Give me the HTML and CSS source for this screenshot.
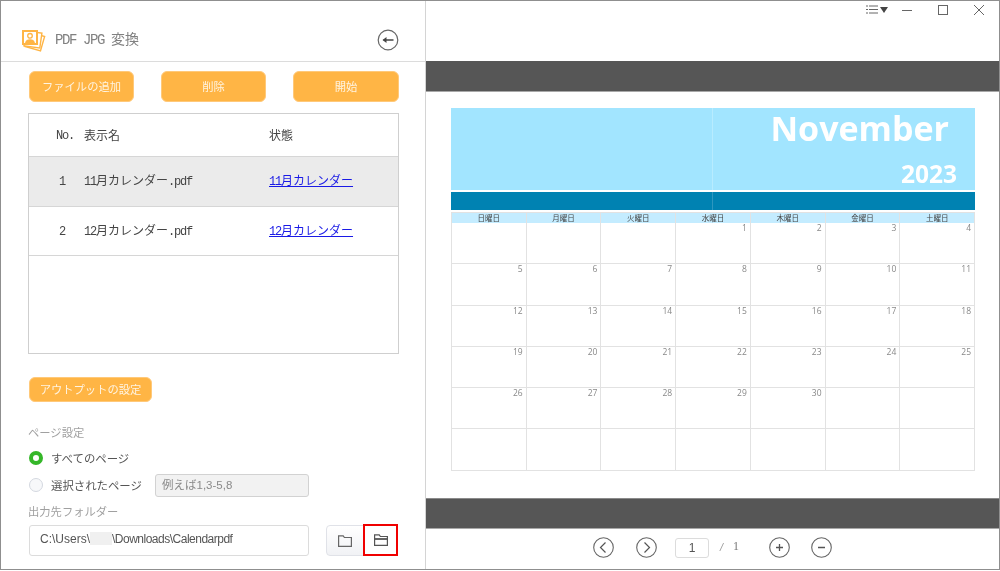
FILE: index.html
```html
<!DOCTYPE html>
<html lang="ja">
<head>
<meta charset="utf-8">
<title>PDF JPG 変換</title>
<link rel="stylesheet" href="styles.css">
</head>
<body>
<div class="window">
  <section class="left">
    <header class="left-head">
      <svg class="logo" width="25" height="25" viewBox="0 0 25 25">
        <rect x="5" y="5" width="16" height="15" transform="rotate(16 13 12)" fill="#fff" stroke="#ffb545" stroke-width="1.400"/>
        <rect x="3" y="3" width="16" height="15" transform="rotate(8 11 10)" fill="#fff" stroke="#ffb545" stroke-width="1.400"/>
        <rect x="0" y="1" width="16" height="15" fill="#ffb545"/>
        <rect x="2" y="3" width="12" height="11" fill="#fff"/>
        <circle cx="8" cy="6.800" r="2.300" fill="none" stroke="#ffb545" stroke-width="1.300"/>
        <path d="M3 14c.6-3 2.500-3.800 5-3.800s4.400.8 5 3.800z" fill="#ffb545"/>
      </svg>
      <h1 class="title"><span class="ltn-lg">PDF JPG </span>変換</h1>
      <svg class="back" width="22" height="22" viewBox="0 0 22 22">
        <circle cx="11" cy="11" r="9.800" fill="none" stroke="#666" stroke-width="1.200"/>
        <path d="M16.500 11H6.500" stroke="#444" stroke-width="1.500"/>
        <path d="M9.500 8L5.500 11l4 3z" fill="#444"/>
      </svg>
    </header>
    <div class="actions">
      <button class="btn btn-main">ファイルの追加</button>
      <button class="btn btn-main">削除</button>
      <button class="btn btn-main">開始</button>
    </div>
    <div class="table">
      <div class="tr th">
        <div class="c-no"><span class="ltn">No.</span></div>
        <div>表示名</div>
        <div>状態</div>
      </div>
      <div class="tr td selected">
        <div class="c-no num"><span class="ltn">1</span></div>
        <div><span class="ltn">11</span>月カレンダー<span class="ltn">.pdf</span></div>
        <div><a class="link" href="#"><span class="ltn">11</span>月カレンダー</a></div>
      </div>
      <div class="tr td td-short">
        <div class="c-no num"><span class="ltn">2</span></div>
        <div><span class="ltn">12</span>月カレンダー<span class="ltn">.pdf</span></div>
        <div><a class="link" href="#"><span class="ltn">12</span>月カレンダー</a></div>
      </div>
    </div>
    <button class="btn btn-output">アウトプットの設定</button>
    <div class="label label-page">ページ設定</div>
    <div class="radio-row first">
      <span class="radio on"></span><span class="radio-text">すべてのページ</span>
    </div>
    <div class="radio-row second">
      <span class="radio"></span><span class="radio-text">選択されたページ</span>
      <div class="range">例えば1,3-5,8</div>
    </div>
    <div class="label label-folder">出力先フォルダー</div>
    <div class="folder-row">
      <div class="path">C:\Users\<span class="redact"></span><span class="path-tail">\Downloads\Calendarpdf</span></div>
      <div class="folder-btns">
        <div class="fbtn">
          <svg width="14" height="12" viewBox="0 0 14 12"><path d="M.6 11.400V.8h4.600l1.200 1.700h7v8.900z" fill="none" stroke="#666" stroke-width="1.200"/></svg>
        </div>
        <div class="fbtn fbtn-marked">
          <svg width="14" height="12" viewBox="0 0 14 12"><path d="M.6 11.400V.8h4.600l1.200 1.700h7v8.900z" fill="none" stroke="#555" stroke-width="1.200"/><path d="M.6 5h12.800" stroke="#555" stroke-width="1.800"/></svg>
        </div>
      </div>
    </div>
  </section>

  <section class="right">
    <div class="win-bar">
      <svg class="w-menu" width="22" height="10" viewBox="0 0 22 10">
        <path d="M0 1h2M3 1h9M0 4.500h2M3 4.500h9M0 8h2M3 8h9" stroke="#666" stroke-width="1"/>
        <path d="M14 2h8l-4 6z" fill="#444"/>
      </svg>
      <svg class="w-min" width="10" height="10" viewBox="0 0 10 10"><path d="M0 5.500h10" stroke="#666" stroke-width="1"/></svg>
      <svg class="w-max" width="10" height="10" viewBox="0 0 10 10"><rect x=".5" y=".5" width="9" height="9" fill="none" stroke="#666"/></svg>
      <svg class="w-close" width="10" height="10" viewBox="0 0 10 10"><path d="M0 0l10 10M10 0L0 10" stroke="#666" stroke-width="1"/></svg>
    </div>
    <div class="band"></div>
    <div class="doc">
      <div class="sheet">
        <div class="cal-head">
          <div class="split"></div>
          <div class="cal-title">
            <div class="month">November</div>
            <div class="year">2023</div>
          </div>
        </div>
        <div class="cal-bar"><div class="split"></div></div>
        <div class="cal-grid">
          <div class="wd">日曜日</div><div class="wd">月曜日</div><div class="wd">火曜日</div><div class="wd">水曜日</div><div class="wd">木曜日</div><div class="wd">金曜日</div><div class="wd">土曜日</div>
          <div class="day"></div><div class="day"></div><div class="day"></div><div class="day">1</div><div class="day">2</div><div class="day">3</div><div class="day">4</div>
          <div class="day">5</div><div class="day">6</div><div class="day">7</div><div class="day">8</div><div class="day">9</div><div class="day">10</div><div class="day">11</div>
          <div class="day">12</div><div class="day">13</div><div class="day">14</div><div class="day">15</div><div class="day">16</div><div class="day">17</div><div class="day">18</div>
          <div class="day">19</div><div class="day">20</div><div class="day">21</div><div class="day">22</div><div class="day">23</div><div class="day">24</div><div class="day">25</div>
          <div class="day">26</div><div class="day">27</div><div class="day">28</div><div class="day">29</div><div class="day">30</div><div class="day"></div><div class="day"></div>
          <div class="day"></div><div class="day"></div><div class="day"></div><div class="day"></div><div class="day"></div><div class="day"></div><div class="day"></div>
        </div>
      </div>
    </div>
    <div class="band band-bottom"></div>
    <div class="pager">
      <svg class="pg pg-prev" width="21" height="21" viewBox="0 0 21 21"><circle cx="10.500" cy="10.500" r="9.800" fill="none" stroke="#666" stroke-width="1.100"/><path d="M12.500 5.500l-5 5 5 5" fill="none" stroke="#555" stroke-width="1.200"/></svg>
      <svg class="pg pg-next" width="21" height="21" viewBox="0 0 21 21"><circle cx="10.500" cy="10.500" r="9.800" fill="none" stroke="#666" stroke-width="1.100"/><path d="M8.500 5.500l5 5-5 5" fill="none" stroke="#555" stroke-width="1.200"/></svg>
      <div class="page-input">1</div>
      <span class="slash">/</span>
      <span class="total">1</span>
      <svg class="pg pg-plus" width="21" height="21" viewBox="0 0 21 21"><circle cx="10.500" cy="10.500" r="9.800" fill="none" stroke="#666" stroke-width="1.100"/><path d="M7 10.500h7M10.500 7v7" stroke="#555" stroke-width="1.300"/></svg>
      <svg class="pg pg-minus" width="21" height="21" viewBox="0 0 21 21"><circle cx="10.500" cy="10.500" r="9.800" fill="none" stroke="#666" stroke-width="1.100"/><path d="M7 10.500h7" stroke="#555" stroke-width="1.500"/></svg>
    </div>
  </section>
</div>
</body>
</html>
```
FILE: styles.css
```css
* { box-sizing: border-box; }
html, body { margin: 0; padding: 0; }
body {
  width: 1000px;
  height: 571px;
  overflow: hidden;
  background: #fff;
  font-family: "Liberation Sans", "Noto Sans CJK JP", sans-serif;
}
.window {
  display: flex;
  width: 1000px;
  height: 570px;
  border: 1px solid #8f8f8f;
  background: #fff;
  filter: blur(0.35px);
}

/* left panel */
.left {
  width: 425px;
  flex: none;
  border-right: 1px solid #d4d4d4;
  display: flex;
  flex-direction: column;
}
.left-head {
  height: 61px;
  flex: none;
  display: flex;
  align-items: flex-start;
  padding: 28px 0 0 21px;
  border-bottom: 1px solid #dcdcdc;
}
.logo { flex: none; }
.title {
  margin: 1px 0 0 8px;
  font: 400 14px/20px "Liberation Mono", "Noto Sans CJK JP", monospace;
  color: #808080;
}
.ltn-lg { font-size: 14px; letter-spacing: -1.4px; white-space: pre; }
.ltn { font-family: "Liberation Mono", monospace; font-size: 12px; letter-spacing: -1.2px; }
.back { margin: 0 0 0 238px; }

.btn {
  border: 1px solid #ffc97a;
  border-radius: 6px;
  background: #ffb545;
  color: #fff4e2;
  font: 400 11.300px/1 "Noto Sans CJK JP", sans-serif;
  padding: 0;
}
.actions {
  display: flex;
  gap: 27px;
  padding: 9px 0 0 28px;
}
.btn-main { width: 105px; height: 31px; }
.actions .btn:last-child { width: 106px; }

.table {
  margin: 11px 0 0 27px;
  width: 371px;
  height: 241px;
  border: 1px solid #cfcfcf;
  flex: none;
}
.tr {
  display: grid;
  grid-template-columns: 55px 185px 1fr;
  align-items: center;
  font: 400 12px/16px "Noto Sans CJK JP", sans-serif;
  color: #444;
  border-bottom: 1px solid #d6d6d6;
}
.th { height: 43px; }
.td { height: 50px; padding-bottom: 1px; }
.td-short { height: 49px; }
.selected { background: #ebebeb; }
.c-no { padding-left: 27px; }
.num { padding-left: 30px; }
.link { color: #1a1ae6; text-decoration: underline; }

.btn-output {
  width: 123px;
  height: 25px;
  margin: 23px 0 0 28px;
  flex: none;
}
.label {
  font: 400 11.300px/16px "Noto Sans CJK JP", sans-serif;
  color: #a0a0a0;
  padding-left: 27px;
}
.label-page { margin-top: 22px; }
.radio-row {
  display: flex;
  align-items: center;
  padding-left: 28px;
  height: 23px;
}
.first { margin-top: 6px; }
.second { margin-top: 4px; }
.radio {
  width: 14px;
  height: 14px;
  flex: none;
  border-radius: 50%;
  border: 1px solid #d4d8e0;
  background: #f7f8fa;
}
.radio.on {
  border: 4px solid #35b729;
  background: #fff;
}
.radio-text {
  margin-left: 8px;
  font: 400 11.400px/16px "Noto Sans CJK JP", sans-serif;
  color: #555;
  white-space: nowrap;
  width: 104px;
}
.range {
  width: 154px;
  height: 23px;
  margin-top: 2px;
  border: 1px solid #d2d2d2;
  border-radius: 3px;
  background: #f2f2f2;
  color: #8a8a8a;
  font: 400 11.500px/21px "Liberation Sans", "Noto Sans CJK JP", sans-serif;
  padding-left: 6px;
}
.label-folder { margin-top: 7px; }
.folder-row {
  display: flex;
  padding-left: 28px;
  margin-top: 6px;
}
.path {
  width: 280px;
  height: 31px;
  border: 1px solid #dcdcdc;
  border-radius: 3px;
  font-size: 12px;
  line-height: 26px;
  color: #555;
  padding-left: 10px;
  white-space: nowrap;
}
.path-tail { letter-spacing: -0.5px; }
.redact {
  display: inline-block;
  width: 22px;
  height: 13px;
  vertical-align: -2px;
  background: #f0f0f0;
}
.folder-btns {
  display: flex;
  margin-left: 17px;
  height: 31px;
  border: 1px solid #e0e2e8;
  border-radius: 4px;
  background: linear-gradient(#fff, #f1f2f5);
}
.fbtn {
  width: 36px;
  display: flex;
  align-items: center;
  justify-content: center;
}
.fbtn-marked {
  width: 35px;
  margin: -2px -1px -1px 0;
  border: 2px solid #f00000;
  background: #fff;
}

/* right panel */
.right {
  flex: 1;
  min-width: 0;
  display: flex;
  flex-direction: column;
}
.win-bar {
  height: 60px;
  flex: none;
  display: flex;
  align-items: flex-start;
  padding: 4px 0 0 440px;
}
.w-menu { flex: none; }
.w-min { margin-left: 14px; flex: none; }
.w-max { margin-left: 26px; flex: none; }
.w-close { margin-left: 26px; flex: none; }
.band {
  height: 31px;
  flex: none;
  background: #565656;
  border-bottom: 1px solid #a8a8a8;
}
.band-bottom { border-top: 1px solid #8a8a8a; }
.doc {
  height: 406px;
  flex: none;
  padding: 16px 0 0 25px;
}
.sheet { width: 524px; }
.cal-head {
  height: 82px;
  background: #a2e5ff;
  display: flex;
}
.split {
  width: 262px;
  flex: none;
  border-right: 1px solid #b8ecff;
}
.cal-title {
  flex: 1;
  display: flex;
  flex-direction: column;
  align-items: flex-end;
  color: #fff;
  font-family: "Open Sans", sans-serif;
  font-weight: 700;
}
.month { font-size: 34px; line-height: 40px; margin: 0 26px 0 0; }
.year { font-size: 24.500px; line-height: 30px; margin: 11px 18px 0 0; }
.cal-bar {
  height: 18px;
  margin-top: 2px;
  background: #0082b2;
  display: flex;
}
.cal-bar .split { border-right-color: #2e97bf; }
.cal-grid {
  margin-top: 2px;
  display: grid;
  grid-template-columns: repeat(7, 1fr);
  grid-template-rows: 10px repeat(6, 41.300px);
  border-left: 1px solid #e2e2e2;
  border-top: 1px solid #e2e2e2;
}
.wd {
  background: #c4ecff;
  font: 400 7.500px/10px "Noto Sans CJK JP", sans-serif;
  color: #444;
  text-align: center;
  border-right: 1px solid #e2e2e2;
}
.day {
  border-right: 1px solid #e2e2e2;
  border-bottom: 1px solid #e2e2e2;
  font: 400 8.500px/10px "Open Sans", sans-serif;
  color: #888;
  text-align: right;
  padding: 0 3px 0 0;
}
.pager {
  flex: 1;
  display: flex;
  align-items: center;
  padding: 0 0 3px 167px;
}
.pg { flex: none; }
.pg-next { margin-left: 22px; }
.pg-plus { margin-left: 30px; }
.pg-minus { margin-left: 21px; }
.page-input {
  width: 34px;
  height: 20px;
  margin-left: 18px;
  border: 1px solid #dcdcdc;
  border-radius: 3px;
  font-size: 12px;
  line-height: 18px;
  text-align: center;
  color: #555;
}
.slash {
  margin-left: 11px;
  font: italic 400 11px/1 "Liberation Sans", sans-serif;
  color: #999;
}
.total {
  margin: -4px 0 0 10px;
  font: 400 12px/1 "Liberation Serif", serif;
  color: #777;
}
```
